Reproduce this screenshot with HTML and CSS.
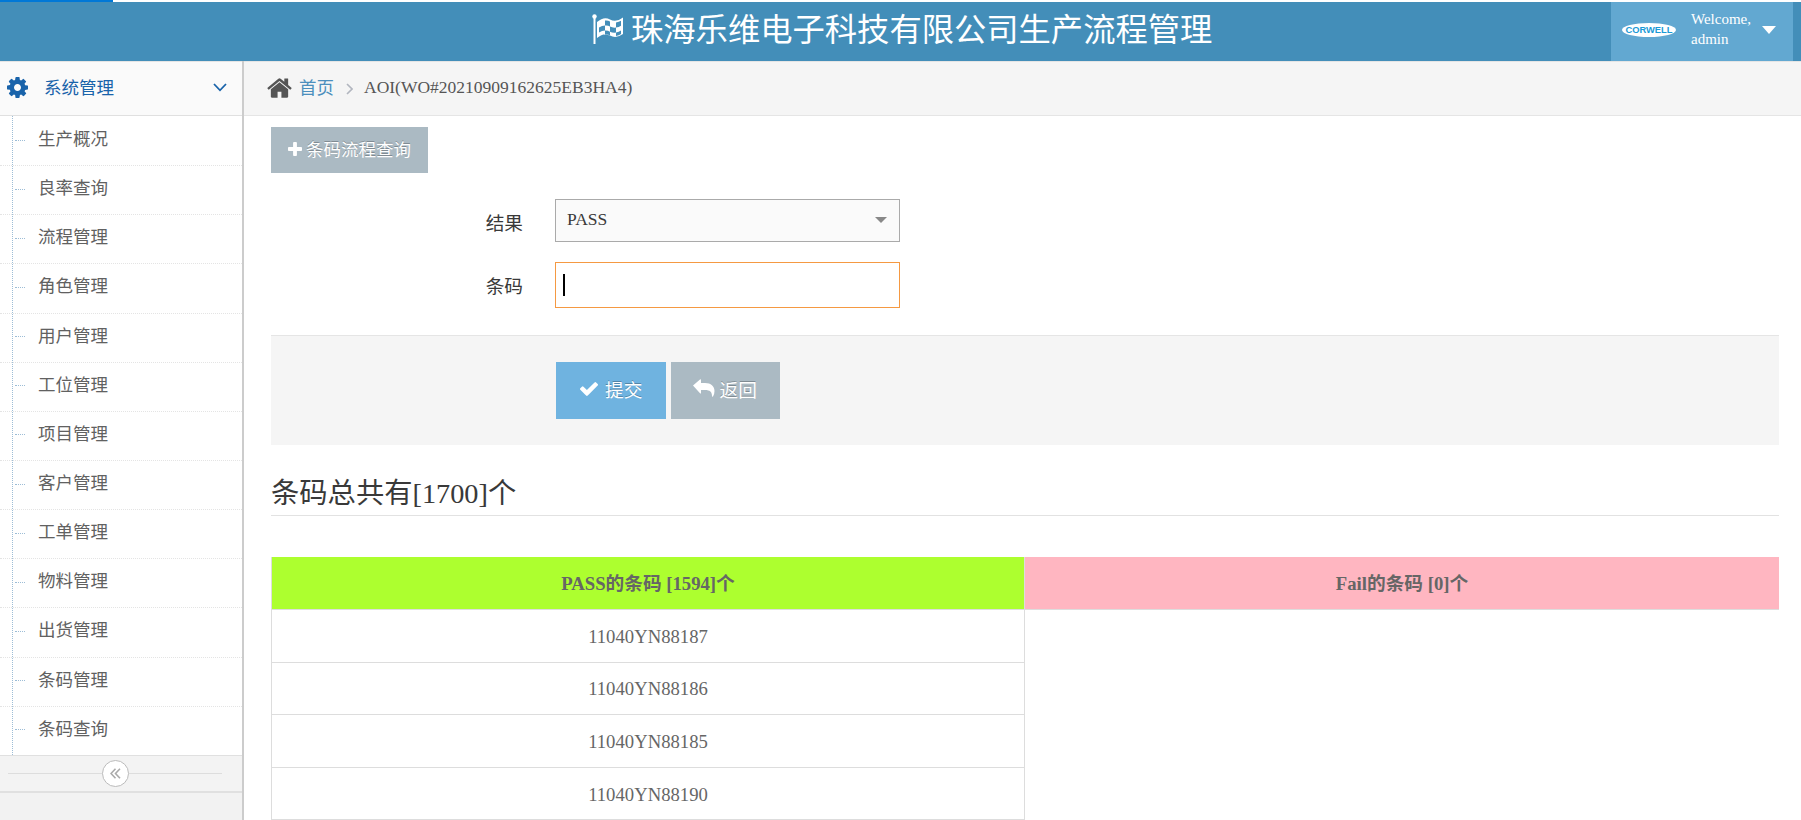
FILE: index.html
```html
<!DOCTYPE html>
<html lang="zh-CN">
<head>
<meta charset="utf-8">
<title>珠海乐维电子科技有限公司生产流程管理</title>
<link rel="stylesheet" href="styles.css">
</head>
<body>
<div class="progress"><div class="progress-bar"></div></div>
<header class="navbar">
  <h1 class="brand">
    <svg class="flag" viewBox="0 0 33 32"><circle cx="2.500" cy="2.500" r="2.200" fill="#fff"/><path d="M2.500 3v27" stroke="#fff" stroke-width="2"/><path fill="#fff" fill-rule="evenodd" d="M5 8q7-6 13-2.500t13-2v16.500q-7 5-13 1.500t-13 2.500zM13 6.500v5q-3 0-6 2v5q3-2 6-2v-5q3-.3 5 1v5.200q3 1.500 6 .8v-5q3-.3 5-1.800v-5q-2 1.300-5 1.800v5q-3 .5-6-1v-5q-2-1.300-5-1zM13 16.500v4q2.500 0 5 1.200v-4q-2-1.300-5-1.200zM24 18.500q3-.5 5-2v3.500q-2 1.500-5 2z"/></svg>
    <span>珠海乐维电子科技有限公司生产流程管理</span>
  </h1>
  <div class="user">
    <svg class="avatar" viewBox="0 0 54 14"><ellipse cx="27" cy="7" rx="27" ry="7" fill="#fff"/><text x="27" y="10.2" text-anchor="middle" textLength="47" lengthAdjust="spacingAndGlyphs">CORWELL</text></svg>
    <span class="welcome">Welcome,<br>admin</span>
    <svg class="caret" viewBox="0 0 14 8"><path d="M0 0h14l-7 8z"/></svg>
  </div>
</header>
<div class="container">
  <nav class="sidebar">
    <a class="nav-head">
      <svg class="cog" viewBox="128 128 1536 1536"><path d="M1152 896q0-106-75-181t-181-75-181 75-75 181 75 181 181 75 181-75 75-181zm512-109v222q0 12-8 23t-20 13l-185 28q-19 54-39 91 35 50 107 138 10 12 10 25t-9 23q-27 37-99 108t-94 71q-12 0-26-9l-138-108q-44 23-91 38-16 136-29 186-7 28-36 28h-222q-14 0-24.500-8.500t-11.500-21.500l-28-184q-49-16-90-37l-141 107q-10 9-25 9-14 0-25-11-126-114-165-168-7-10-7-23 0-12 8-23 15-21 51-66.500t54-70.500q-27-50-41-99l-183-27q-13-2-21-12.500t-8-23.500v-222q0-12 8-23t19-13l186-28q14-46 39-92-40-57-107-138-10-12-10-24 0-10 9-23 26-36 98.500-107.500t94.500-71.500q13 0 26 10l138 107q44-23 91-38 16-136 29-186 7-28 36-28h222q14 0 24.500 8.500t11.500 21.500l28 184q49 16 90 37l142-107q9-9 24-9 13 0 25 10 129 119 165 170 7 8 7 22 0 12-8 23-15 21-51 66.500t-54 70.500q26 50 41 98l183 28q13 2 21 12.500t8 23.500z"/></svg>
      <span>系统管理</span>
      <svg class="chev" viewBox="0 0 14 9"><path d="M1 1l6 6.300 6-6.300"/></svg>
    </a>
    <ul class="submenu">
      <li>生产概况</li><li>良率查询</li><li>流程管理</li><li>角色管理</li><li>用户管理</li><li>工位管理</li><li>项目管理</li><li>客户管理</li><li>工单管理</li><li>物料管理</li><li>出货管理</li><li>条码管理</li><li>条码查询</li>
    </ul>
    <div class="toggle">
      <span class="toggle-btn"><svg viewBox="0 0 11 11"><path d="M5.500.8L1 5.500l4.500 4.700M10 .8L5.500 5.500l4.500 4.700"/></svg></span>
    </div>
  </nav>
  <main class="main">
    <div class="breadcrumb">
      <svg class="home" viewBox="64 253 1664 1283"><path d="M1472 992v480q0 26-19 45t-45 19h-384v-384h-256v384h-384q-26 0-45-19t-19-45v-480q0-1 .5-3t.5-3l575-474 575 474q1 2 1 6zm223-69l-62 74q-8 9-21 11h-3q-13 0-21-7l-692-577-692 577q-12 8-24 7-13-2-21-11l-62-74q-8-10-7-23.500t11-21.500l719-599q32-26 76-26t76 26l244 204v-195q0-14 9-23t23-9h192q14 0 23 9t9 23v408l219 182q10 8 11 21.500t-7 23.500z"/></svg>
      <a class="home-link">首页</a>
      <svg class="sep" viewBox="0 0 7 12"><path d="M1 1l5 5-5 5"/></svg>
      <span>AOI(WO#20210909162625EB3HA4)</span>
    </div>
    <div class="content">
      <button class="btn btn-query"><svg class="plus" viewBox="192 128 1408 1408"><path d="M1600 736v192q0 40-28 68t-68 28h-416v416q0 40-28 68t-68 28h-192q-40 0-68-28t-28-68v-416h-416q-40 0-68-28t-28-68v-192q0-40 28-68t68-28h416v-416q0-40 28-68t68-28h192q40 0 68 28t28 68v416h416q40 0 68 28t28 68z"/></svg><span>条码流程查询</span></button>
      <form class="form">
        <div class="row row-select"><label>结果</label><div class="select"><span>PASS</span><svg viewBox="0 0 12 6"><path d="M0 0h12l-6 6z"/></svg></div></div>
        <div class="row row-input"><label>条码</label><div class="input"><i class="cursor"></i></div></div>
        <div class="actions">
          <button class="btn btn-submit" type="button"><svg class="check" viewBox="121 334 1550 1188"><path d="M1671 566q0 40-28 68l-724 724-136 136q-28 28-68 28t-68-28l-136-136-362-362q-28-28-28-68t28-68l136-136q28-28 68-28t68 28l294 295 656-657q28-28 68-28t68 28l136 136q28 28 28 68z"/></svg><span>提交</span></button>
          <button class="btn btn-back" type="button"><svg class="reply" viewBox="0 0 22 18"><path d="M0 6.500L7 .5Q8 0 8 1v3h4c6 0 9.500 3.500 9.500 8q0 3-1.500 5.500-1 .6-1-.5c0-4-2-6-7-6h-4v3q0 1-1 .3z"/></svg><span>返回</span></button>
        </div>
      </form>
      <h3 class="total">条码总共有[1700]个</h3>
      <div class="tables">
        <table class="pass"><thead><tr><th>PASS的条码 [1594]个</th></tr></thead><tbody><tr><td>11040YN88187</td></tr><tr><td>11040YN88186</td></tr><tr><td>11040YN88185</td></tr><tr><td>11040YN88190</td></tr></tbody></table>
        <table class="fail"><thead><tr><th>Fail的条码 [0]个</th></tr></thead></table>
      </div>
    </div>
  </main>
</div>
</body>
</html>
```
FILE: styles.css
```css
* { box-sizing: border-box; }
body {
  margin: 0;
  height: 820px;
  overflow: hidden;
  background: #fff;
  color: #393939;
  font-family: "Liberation Serif", "Noto Sans CJK SC", serif;
  font-size: 17.5px;
}
svg { display: block; flex: none; }

.progress { height: 2px; }
.progress-bar { width: 113px; height: 2px; background: #0078d7; }

.navbar {
  display: flex;
  justify-content: flex-end;
  height: 59px;
  padding-right: 8px;
  background: #438eb9;
}
.brand {
  display: flex;
  flex: 1;
  align-items: flex-start;
  margin: 0;
  padding-left: 592px;
  color: #fff;
  font-size: 32.3px;
  font-weight: 400;
  line-height: 57px;
  white-space: nowrap;
}
.flag { width: 33px; height: 32px; margin: 12px 6px 0 0; }
.user {
  display: flex;
  align-items: center;
  width: 182px;
  padding-left: 11px;
  background: #62a8d1;
  color: #fff;
}
.avatar { width: 54px; height: 14px; margin-top: -3px; }
.avatar text { fill: #1a9ad6; font: bold 9px "Liberation Sans", sans-serif; }
.welcome { width: 71px; margin: -5px 0 0 15px; font-size: 15px; line-height: 20.500px; }
.caret { width: 14px; height: 8px; margin-top: -4px; fill: #fff; }

.container { display: flex; height: 759px; }
.sidebar {
  flex: none;
  width: 244px;
  border-right: 2px solid #ccc;
  background: #f2f2f2;
}
.nav-head {
  display: flex;
  align-items: center;
  height: 55px;
  padding: 0 15px 2px 7px;
  border-top: 1px solid #e5e5e5;
  border-bottom: 1px solid #e0e0e0;
  background: #fafafa;
  color: #1963aa;
}
.nav-head span { flex: 1; margin-left: 16px; padding-bottom: 2px; }
.cog { width: 21px; height: 21px; fill: #1963aa; }
.chev { width: 14px; height: 9px; fill: none; stroke: #1963aa; stroke-width: 1.8; }

.submenu {
  position: relative;
  margin: 0;
  padding: 0;
  background: #fff;
  color: #616161;
  list-style: none;
}
.submenu::before {
  content: "";
  position: absolute;
  top: 0;
  bottom: 0;
  left: 12px;
  border-left: 1px dotted #9dbdd6;
}
.submenu li {
  display: flex;
  align-items: center;
  height: 49.150px;
  padding-bottom: 7px;
  border-top: 1px dotted #e4e4e4;
}
.submenu li:first-child { border-top-color: transparent; }
.submenu li::before {
  content: "";
  width: 10px;
  margin: 5px 13px 0 15px;
  border-top: 1px dotted #9dbdd6;
}
.toggle {
  display: flex;
  align-items: center;
  height: 38px;
  padding: 0 20px 0 8px;
  border-top: 1px solid #e0e0e0;
  border-bottom: 2px solid #e0e0e0;
  background: #f3f3f3;
}
.toggle::before, .toggle::after { content: ""; height: 1px; background: #ddd; }
.toggle::before { width: 94px; }
.toggle::after { flex: 1; }
.toggle-btn {
  display: flex;
  align-items: center;
  justify-content: center;
  width: 27px;
  height: 27px;
  border: 1.500px solid #bbb;
  border-radius: 50%;
  background: #fff;
}
.toggle-btn svg { width: 11px; height: 11px; fill: none; stroke: #aaa; stroke-width: 1.6; }

.main { flex: 1; min-width: 0; }
.breadcrumb {
  display: flex;
  align-items: center;
  height: 55px;
  padding: 0 0 2px 23px;
  border-top: 1px solid #e5e5e5;
  border-bottom: 1px solid #e5e5e5;
  background: #f5f5f5;
  color: #555;
}
.home { width: 25px; height: 20px; fill: #555; }
.home-link { margin-left: 7px; padding-bottom: 2px; color: #4c8fbd; }
.sep { width: 7px; height: 12px; margin: 2px 11px 0 12px; fill: none; stroke: #b2b6bf; stroke-width: 1.6; }

.content { padding: 11px 22px 0 27px; }
.btn {
  display: flex;
  align-items: center;
  margin: 0;
  padding: 0 0 3px;
  border: 0;
  color: #fff;
  font-family: inherit;
  text-shadow: 0 -1px 0 rgba(0, 0, 0, .25);
}
.btn svg { fill: #fff; }
.btn-query {
  width: 157px;
  height: 46px;
  padding-left: 17px;
  background: #abbac3;
  font-size: 17.5px;
}
.btn-query span { padding-bottom: 1px; }
.plus { width: 14px; height: 14px; margin-right: 4px; }

.row { display: flex; align-items: center; font-size: 18.7px; }
.row label { width: 252px; margin-right: 32px; text-align: right; }
.row-select { margin-top: 26px; height: 43px; }
.row-select label { padding-top: 2px; }
.row-input { margin-top: 20px; height: 46px; }
.row-input label { padding-bottom: 1px; }
.select, .input { display: flex; align-items: center; width: 345px; height: 100%; }
.select {
  justify-content: space-between;
  padding: 0 12px 2px 11px;
  border: 1px solid #aaa;
  background: #fafafa;
  font-size: 17.5px;
}
.select svg { width: 12px; height: 6px; fill: #888; }
.input { padding-left: 7px; border: 1px solid #f59942; }
.cursor { width: 1.500px; height: 22px; background: #000; }

.actions {
  display: flex;
  gap: 5px;
  height: 110px;
  margin-top: 27px;
  padding: 26px 0 0 285px;
  border-top: 1px solid #e5e5e5;
  background: #f5f5f5;
}
.actions .btn { width: 109.500px; height: 56.500px; padding-bottom: 2px; font-size: 18.7px; }
.actions .btn span { padding-bottom: 2px; }
.actions .btn-submit { padding-left: 24px; background: #6fb3e0; }
.actions .btn-back { padding-left: 22px; background: #abbac3; }
.check { width: 18px; height: 14px; margin-right: 7px; }
.reply { width: 22px; height: 18px; margin: 0 5px 3px 0; }

.total {
  height: 71px;
  margin: 0;
  padding-top: 29px;
  border-bottom: 1px solid #e2e2e2;
  font-size: 28.3px;
  font-weight: 400;
  line-height: 40px;
}
.tables {
  display: grid;
  grid-template-columns: 754px 754px;
  align-items: start;
  margin-top: 41px;
}
table { width: 100%; border-collapse: separate; border-spacing: 0; color: #666; font-size: 18.7px; }
th, td { height: 52.600px; padding: 2px 0 0; border-bottom: 1px solid #ddd; line-height: 26px; text-align: center; }
th { height: 53px; }
.pass th, .pass td { border-left: 1px solid #ddd; border-right: 1px solid #ddd; }
.pass th { background: #adff2f; }
.fail th { background: #ffb6c1; }
```
